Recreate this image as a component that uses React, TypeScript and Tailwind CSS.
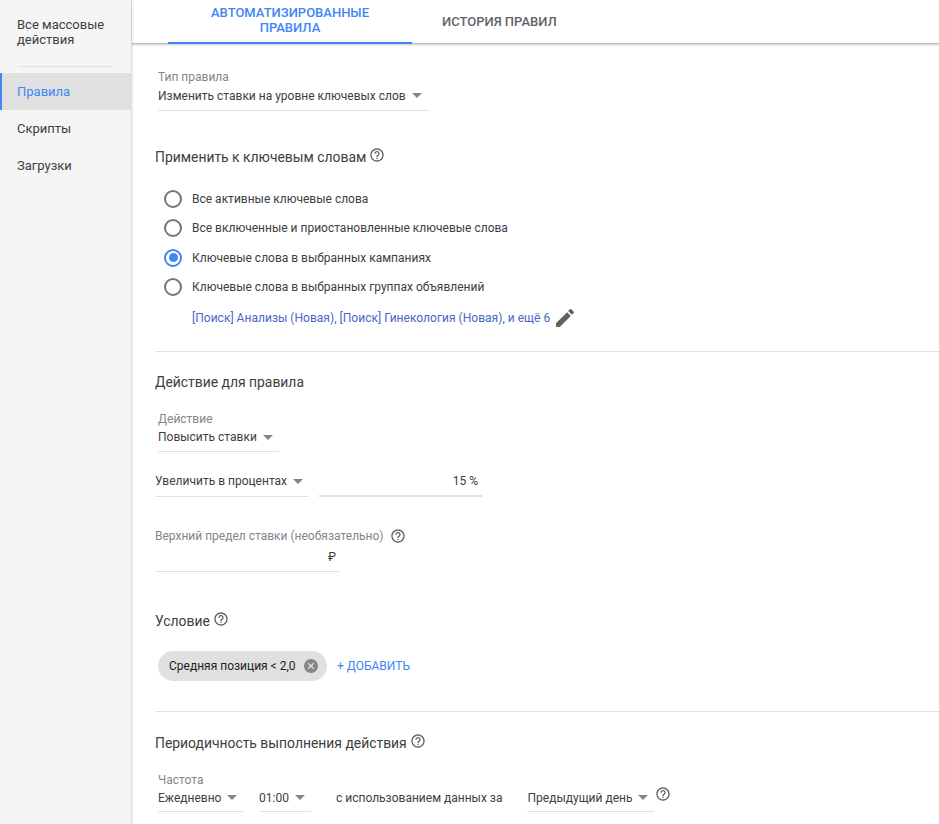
import { ReactNode } from 'react';

function Caret() {
  return <span className="inline-block w-0 h-0 shrink-0 border-x-[5px] border-x-transparent border-t-[5px] border-t-[#858585]" />;
}

function Help({ className = '' }: { className?: string }) {
  return (
    <svg viewBox="0 0 24 24" className={`w-[16px] h-[16px] shrink-0 ${className}`} fill="#616161">
      <path d="M11 18h2v-2h-2v2zm1-16C6.48 2 2 6.48 2 12s4.48 10 10 10 10-4.48 10-10S17.52 2 12 2zm0 18c-4.41 0-8-3.59-8-8s3.59-8 8-8 8 3.59 8 8-3.59 8-8 8zm0-14c-2.21 0-4 1.79-4 4h2c0-1.1.9-2 2-2s2 .9 2 2c0 2-3 1.75-3 5h2c0-2.25 3-2.5 3-5 0-2.21-1.79-4-4-4z" />
    </svg>
  );
}

function Radio({ label, checked = false }: { label: string; checked?: boolean }) {
  return (
    <div className="flex items-center h-[29.5px]">
      <span
        className={`w-[18px] h-[18px] rounded-full border-2 flex items-center justify-center ml-[9px] mr-[10px] ${
          checked ? 'border-[#4285f4]' : 'border-[#757575]'
        }`}
      >
        {checked && <span className="w-[9px] h-[9px] rounded-full bg-[#4285f4]" />}
      </span>
      <span className="text-[12px] text-[#3c4043]">{label}</span>
    </div>
  );
}

function Select({ value, className = '' }: { value: string; className?: string }) {
  return (
    <div className={`flex items-center gap-[6px] border-b border-[#e0e0e0] text-[12px] whitespace-nowrap text-[#3c4043] ${className}`}>
      <span>{value}</span>
      <Caret />
    </div>
  );
}

function Heading({ children }: { children: ReactNode }) {
  return (
    <div className="flex items-center h-[20px] text-[13.9px] text-[#3c4043]">
      <span>{children}</span>
      <Help className="ml-[3px] -mt-[4px]" />
    </div>
  );
}

export default function App() {
  return (
    <div className="flex h-[824px] w-[939px] overflow-hidden bg-white font-['Roboto',sans-serif]">
      <aside className="w-[132px] shrink-0 bg-[#f5f5f5] border-r border-[#e0e0e0] shadow-[1px_0_2px_rgba(0,0,0,0.08)] text-[13px] text-[#3c4043]">
        <div className="pl-[17px] pr-3 pt-[17px] leading-[15px]">Все массовые<br />действия</div>
        <div className="mx-[18px] mt-[19px] mb-[6px] h-px bg-[#e0e0e0]" />
        <div className="h-[37px] flex items-center pl-[15px] bg-[#e0e0e0] border-l-2 border-[#4285f4] text-[#4285f4]">Правила</div>
        <div className="h-[37px] flex items-center pl-[17px]">Скрипты</div>
        <div className="h-[37px] flex items-center pl-[17px]">Загрузки</div>
      </aside>

      <main className="flex-1 min-w-0">
        <div className="h-[44px] flex pl-[36px] border-b border-[#bdbdbd] shadow-[0_1px_2px_rgba(0,0,0,0.2)] text-[13px] font-medium">
          <div className="w-[244px] h-[44px] border-b-2 border-[#4285f4] text-[#4285f4] text-center leading-[15px] pt-[5px]">
            АВТОМАТИЗИРОВАННЫЕ<br />ПРАВИЛА
          </div>
          <div className="ml-[30px] pt-[12px] text-[#5f6368]">ИСТОРИЯ ПРАВИЛ</div>
        </div>

        <div className="pl-[23px]">
          <div className="ml-[3px] mt-[26px] w-[271px]">
            <div className="text-[12px] leading-[14px] text-[#80868b]">Тип правила</div>
            <Select value="Изменить ставки на уровне ключевых слов" className="h-[27px] pb-[3px]" />
          </div>

          <div className="mt-[36px]">
            <Heading>Применить к ключевым словам</Heading>
          </div>
          <div className="mt-[17px]">
            <Radio label="Все активные ключевые слова" />
            <Radio label="Все включенные и приостановленные ключевые слова" />
            <Radio label="Ключевые слова в выбранных кампаниях" checked />
            <Radio label="Ключевые слова в выбранных группах объявлений" />
          </div>
          <div className="flex items-center h-[30px] mt-[1px] pl-[37px] text-[12.05px] text-[#4a66c9]">
            <span>[Поиск] Анализы (Новая), [Поиск] Гинекология (Новая), и ещё 6</span>
            <svg viewBox="0 0 24 24" className="w-[24px] h-[24px] ml-[3px]" fill="#616161">
              <path d="M3 17.25V21h3.75L17.81 9.94l-3.75-3.75L3 17.25zM20.71 7.04a1 1 0 0 0 0-1.41l-2.34-2.34a1 1 0 0 0-1.41 0l-1.83 1.83 3.75 3.75 1.83-1.83z" />
            </svg>
          </div>
          <div className="mt-[18px] h-px bg-[#e0e0e0]" />

          <div className="mt-[20px] h-[20px] text-[13.9px] leading-[20px] text-[#3c4043]">Действие для правила</div>
          <div className="ml-[3px] mt-[20px] w-[121px]">
            <div className="text-[12px] leading-[14px] text-[#80868b]">Действие</div>
            <Select value="Повысить ставки" className="h-[26px] pb-[3px]" />
          </div>
          <div className="flex mt-[15px]">
            <Select value="Увеличить в процентах" className="w-[154px] h-[30px] pb-[1px]" />
            <div className="w-[163px] ml-[10px] h-[30px] border-b-2 border-[#e0e0e0] flex items-center justify-end pr-[4px] text-[12px] text-[#3c4043]">15 %</div>
          </div>

          <div className="mt-[31px] flex items-center h-[16px] text-[12px] text-[#80868b]">
            <span>Верхний предел ставки (необязательно)</span>
            <Help className="ml-[6px]" />
          </div>
          <div className="w-[184px] h-[28px] border-b border-[#e0e0e0] flex items-center justify-end pr-[3px] pb-[1px] text-[12px] text-[#3c4043]">₽</div>

          <div className="mt-[39px]">
            <Heading>Условие</Heading>
          </div>
          <div className="flex items-center mt-[20px]">
            <div className="ml-[3px] w-[169px] h-[30px] rounded-full bg-[#e0e0e0] flex items-center pl-[11px] text-[12px] text-[#202124]">
              <span>Средняя позиция &lt; 2,0</span>
              <span className="ml-[8px] w-[14px] h-[14px] rounded-full bg-[#858585] flex items-center justify-center">
                <svg viewBox="0 0 10 10" className="w-[8px] h-[8px]" stroke="#e0e0e0" strokeWidth="1.6">
                  <path d="M1.5 1.5l7 7M8.5 1.5l-7 7" />
                </svg>
              </span>
            </div>
            <span className="ml-[10px] text-[12px] text-[#4285f4]">+ ДОБАВИТЬ</span>
          </div>
          <div className="mt-[30px] h-px bg-[#e0e0e0]" />

          <div className="mt-[21px]">
            <Heading>Периодичность выполнения действия</Heading>
          </div>
          <div className="ml-[3px] mt-[20px] text-[12px] leading-[14px] text-[#80868b]">Частота</div>
          <div className="flex ml-[3px] items-start">
            <Select value="Ежедневно" className="w-[85px] h-[25px] pb-[3px]" />
            <Select value="01:00" className="w-[52px] ml-[16px] h-[25px] pb-[3px]" />
            <div className="ml-[25px] h-[25px] pb-[3px] flex items-center text-[12px] text-[#3c4043]">с использованием данных за</div>
            <Select value="Предыдущий день" className="w-[127px] ml-[25px] h-[25px] pb-[3px]" />
            <Help className="ml-[1px] -mt-[1px]" />
          </div>
        </div>
      </main>
    </div>
  );
}
